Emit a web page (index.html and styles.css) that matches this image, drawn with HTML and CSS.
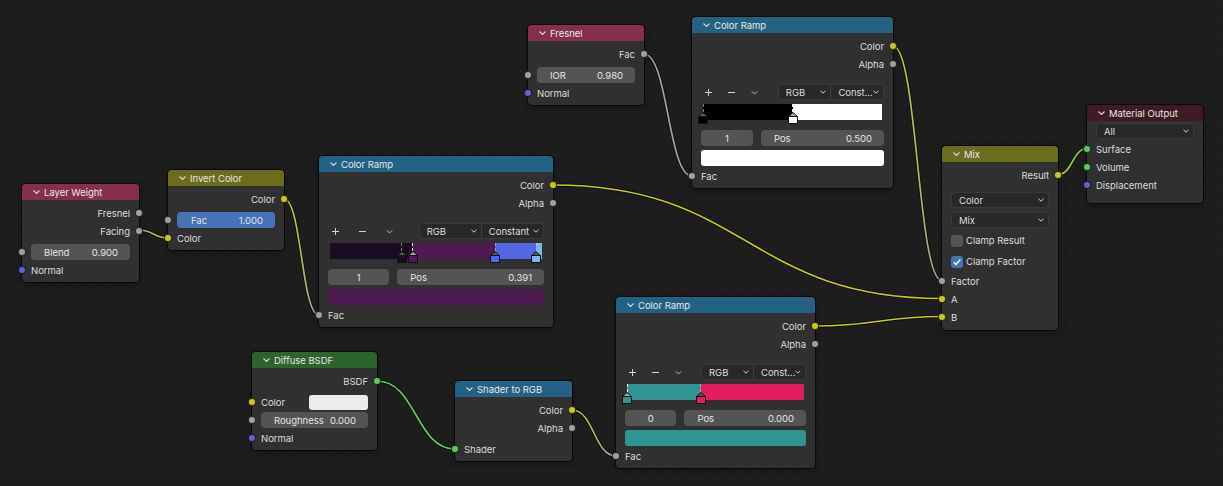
FILE: index.html
```html
<!DOCTYPE html>
<html>
<head>
<meta charset="utf-8">
<title>Shader Nodes</title>
<link rel="stylesheet" href="styles.css">
</head>
<body>
<div class="canvas">
  <svg class="wires" width="1223" height="486" viewBox="0 0 1223 486">
    <defs>
      <linearGradient id="g1" gradientUnits="userSpaceOnUse" x1="139" y1="0" x2="168" y2="0"><stop offset="0" stop-color="#a1a1a1"/><stop offset="1" stop-color="#c7c729"/></linearGradient>
      <linearGradient id="g2" gradientUnits="userSpaceOnUse" x1="284" y1="0" x2="319" y2="0"><stop offset="0" stop-color="#c7c729"/><stop offset="1" stop-color="#a1a1a1"/></linearGradient>
      <linearGradient id="g5" gradientUnits="userSpaceOnUse" x1="893" y1="0" x2="942" y2="0"><stop offset="0" stop-color="#c7c729"/><stop offset="1" stop-color="#a1a1a1"/></linearGradient>
      <linearGradient id="g6" gradientUnits="userSpaceOnUse" x1="1058" y1="0" x2="1087" y2="0"><stop offset="0" stop-color="#c7c729"/><stop offset="1" stop-color="#63c763"/></linearGradient>
      <linearGradient id="g8" gradientUnits="userSpaceOnUse" x1="572" y1="0" x2="616" y2="0"><stop offset="0" stop-color="#c7c729"/><stop offset="1" stop-color="#a1a1a1"/></linearGradient>
    </defs>
    <g class="shadow">
      <path d="M139 230 C153.5 230 153.5 238 168 238"/>
      <path d="M284 199 C301.5 199 301.5 315 319 315"/>
      <path d="M553 185 C747.5 185 747.5 298.5 942 298.5"/>
      <path d="M644 54 C668 54 668 176 692 176"/>
      <path d="M893 46 C917.5 46 917.5 280.5 942 280.5"/>
      <path d="M1058 174.5 C1072.5 174.5 1072.5 148.5 1087 148.5"/>
      <path d="M377 381 C416 381 416 449 455 449"/>
      <path d="M572 410 C594 410 594 456 616 456"/>
      <path d="M815 326 C878.5 326 878.5 316.5 942 316.5"/>
    </g>
    <g class="wire">
      <path stroke="url(#g1)" d="M139 230 C153.5 230 153.5 238 168 238"/>
      <path stroke="url(#g2)" d="M284 199 C301.5 199 301.5 315 319 315"/>
      <path stroke="#c7c729" d="M553 185 C747.5 185 747.5 298.5 942 298.5"/>
      <path stroke="#a1a1a1" d="M644 54 C668 54 668 176 692 176"/>
      <path stroke="url(#g5)" d="M893 46 C917.5 46 917.5 280.5 942 280.5"/>
      <path stroke="url(#g6)" d="M1058 174.5 C1072.5 174.5 1072.5 148.5 1087 148.5"/>
      <path stroke="#63c763" d="M377 381 C416 381 416 449 455 449"/>
      <path stroke="url(#g8)" d="M572 410 C594 410 594 456 616 456"/>
      <path stroke="#c7c729" d="M815 326 C878.5 326 878.5 316.5 942 316.5"/>
    </g>
  </svg>

  <!-- Layer Weight -->
  <div class="node n-lw">
    <div class="hdr h-input"><svg class="chev" width="7" height="4" viewBox="0 0 7 4"><path d="M0.5 0.5 3.5 3.5 6.5 0.5"/></svg><span>Layer Weight</span></div>
    <div class="body">
      <div class="row out"><span>Fresnel</span><i class="sock s-gray"></i></div>
      <div class="row out"><span>Facing</span><i class="sock s-gray"></i></div>
      <div class="row in gap"><i class="sock s-gray"></i><div class="num"><span>Blend</span><span>0.900</span></div></div>
      <div class="row in"><i class="sock s-vec"></i><span>Normal</span></div>
    </div>
  </div>

  <!-- Invert Color -->
  <div class="node n-inv">
    <div class="hdr h-color"><svg class="chev" width="7" height="4" viewBox="0 0 7 4"><path d="M0.5 0.5 3.5 3.5 6.5 0.5"/></svg><span>Invert Color</span></div>
    <div class="body">
      <div class="row out"><span>Color</span><i class="sock s-yel"></i></div>
      <div class="row in gap"><i class="sock s-gray"></i><div class="num blue"><span>Fac</span><span>1.000</span></div></div>
      <div class="row in"><i class="sock s-yel"></i><span>Color</span></div>
    </div>
  </div>

  <!-- Color Ramp (middle) -->
  <div class="node n-crm">
    <div class="hdr h-conv"><svg class="chev" width="7" height="4" viewBox="0 0 7 4"><path d="M0.5 0.5 3.5 3.5 6.5 0.5"/></svg><span>Color Ramp</span></div>
    <div class="body">
      <div class="row out"><span>Color</span><i class="sock s-yel"></i></div>
      <div class="row out"><span>Alpha</span><i class="sock s-gray"></i></div>
      <div class="ramp">
        <div class="tools">
          <div class="ticons">
            <span class="ti"><svg width="7" height="7" viewBox="0 0 7 7"><path d="M3.5 0V7M0 3.5H7"/></svg></span>
            <span class="ti"><svg width="7" height="7" viewBox="0 0 7 7"><path d="M0 3.5H7"/></svg></span>
            <span class="ti"><svg width="7" height="7" viewBox="0 0 7 7"><path class="thin" d="M0.8 2.3 3.5 5 6.2 2.3"/></svg></span>
          </div>
          <div class="seg">
            <div class="dd l"><span>RGB</span><svg class="dchev" width="6" height="4" viewBox="0 0 6 4"><path d="M0.5 0.8 3 3.2 5.5 0.8"/></svg></div>
            <div class="dd r"><span>Constant</span><svg class="dchev" width="6" height="4" viewBox="0 0 6 4"><path d="M0.5 0.8 3 3.2 5.5 0.8"/></svg></div>
          </div>
        </div>
        <div class="bar bar-mid">
          <div class="stop" style="left:33.8%;color:#1a0c21"><i class="dash"></i><svg width="10" height="12" viewBox="0 0 10 12"><path class="tri" d="M0.5 4.5 5 0.5 9.5 4.5Z"/><rect x="0.5" y="4.5" width="9" height="7"/></svg></div>
          <div class="stop active" style="left:39.1%;color:#4f1a4f"><i class="dash"></i><svg width="10" height="12" viewBox="0 0 10 12"><path class="tri" d="M0.5 4.5 5 0.5 9.5 4.5Z"/><rect x="0.5" y="4.5" width="9" height="7"/></svg></div>
          <div class="stop" style="left:78%;color:#5466e4"><i class="dash"></i><svg width="10" height="12" viewBox="0 0 10 12"><path class="tri" d="M0.5 4.5 5 0.5 9.5 4.5Z"/><rect x="0.5" y="4.5" width="9" height="7"/></svg></div>
          <div class="stop" style="left:97.4%;color:#7fb4f4"><i class="dash"></i><svg width="10" height="12" viewBox="0 0 10 12"><path class="tri" d="M0.5 4.5 5 0.5 9.5 4.5Z"/><rect x="0.5" y="4.5" width="9" height="7"/></svg></div>
        </div>
        <div class="rfields"><div class="num center idx">1</div><div class="num"><span>Pos</span><span>0.391</span></div></div>
        <div class="swatch sw-mid"></div>
      </div>
      <div class="row in fac"><i class="sock s-gray"></i><span>Fac</span></div>
    </div>
  </div>

  <!-- Fresnel -->
  <div class="node n-fres">
    <div class="hdr h-input"><svg class="chev" width="7" height="4" viewBox="0 0 7 4"><path d="M0.5 0.5 3.5 3.5 6.5 0.5"/></svg><span>Fresnel</span></div>
    <div class="body">
      <div class="row out"><span>Fac</span><i class="sock s-gray"></i></div>
      <div class="row in gap"><i class="sock s-gray"></i><div class="num"><span>IOR</span><span>0.980</span></div></div>
      <div class="row in"><i class="sock s-vec"></i><span>Normal</span></div>
    </div>
  </div>

  <!-- Color Ramp (top) -->
  <div class="node n-crt">
    <div class="hdr h-conv"><svg class="chev" width="7" height="4" viewBox="0 0 7 4"><path d="M0.5 0.5 3.5 3.5 6.5 0.5"/></svg><span>Color Ramp</span></div>
    <div class="body">
      <div class="row out"><span>Color</span><i class="sock s-yel"></i></div>
      <div class="row out"><span>Alpha</span><i class="sock s-gray"></i></div>
      <div class="ramp">
        <div class="tools">
          <div class="ticons">
            <span class="ti"><svg width="7" height="7" viewBox="0 0 7 7"><path d="M3.5 0V7M0 3.5H7"/></svg></span>
            <span class="ti"><svg width="7" height="7" viewBox="0 0 7 7"><path d="M0 3.5H7"/></svg></span>
            <span class="ti"><svg width="7" height="7" viewBox="0 0 7 7"><path class="thin" d="M0.8 2.3 3.5 5 6.2 2.3"/></svg></span>
          </div>
          <div class="seg">
            <div class="dd l"><span>RGB</span><svg class="dchev" width="6" height="4" viewBox="0 0 6 4"><path d="M0.5 0.8 3 3.2 5.5 0.8"/></svg></div>
            <div class="dd r"><span>Const...</span><svg class="dchev" width="6" height="4" viewBox="0 0 6 4"><path d="M0.5 0.8 3 3.2 5.5 0.8"/></svg></div>
          </div>
        </div>
        <div class="bar bar-top">
          <div class="stop" style="left:0%;color:#000000"><i class="dash"></i><svg width="10" height="12" viewBox="0 0 10 12"><path class="tri" d="M0.5 4.5 5 0.5 9.5 4.5Z"/><rect x="0.5" y="4.5" width="9" height="7"/></svg></div>
          <div class="stop active" style="left:50%;color:#ffffff"><i class="dash"></i><svg width="10" height="12" viewBox="0 0 10 12"><path class="tri" d="M0.5 4.5 5 0.5 9.5 4.5Z"/><rect x="0.5" y="4.5" width="9" height="7"/></svg></div>
        </div>
        <div class="rfields"><div class="num center idx">1</div><div class="num"><span>Pos</span><span>0.500</span></div></div>
        <div class="swatch sw-top"></div>
      </div>
      <div class="row in fac"><i class="sock s-gray"></i><span>Fac</span></div>
    </div>
  </div>

  <!-- Mix -->
  <div class="node n-mix">
    <div class="hdr h-color"><svg class="chev" width="7" height="4" viewBox="0 0 7 4"><path d="M0.5 0.5 3.5 3.5 6.5 0.5"/></svg><span>Mix</span></div>
    <div class="body mixbody">
      <div class="row out"><span>Result</span><i class="sock s-yel"></i></div>
      <div class="dd full first"><span>Color</span><svg class="dchev" width="6" height="4" viewBox="0 0 6 4"><path d="M0.5 0.8 3 3.2 5.5 0.8"/></svg></div>
      <div class="dd full second"><span>Mix</span><svg class="dchev" width="6" height="4" viewBox="0 0 6 4"><path d="M0.5 0.8 3 3.2 5.5 0.8"/></svg></div>
      <div class="chk first-chk"><i class="cb"></i><span>Clamp Result</span></div>
      <div class="chk"><i class="cb on"><svg width="12" height="12" viewBox="0 0 12 12"><path d="M2.8 6.2 5 8.4 9.3 3.6"/></svg></i><span>Clamp Factor</span></div>
      <div class="row in"><i class="sock s-gray"></i><span>Factor</span></div>
      <div class="row in"><i class="sock s-yel"></i><span>A</span></div>
      <div class="row in"><i class="sock s-yel"></i><span>B</span></div>
    </div>
  </div>

  <!-- Material Output -->
  <div class="node n-mo">
    <div class="hdr h-output"><svg class="chev" width="7" height="4" viewBox="0 0 7 4"><path d="M0.5 0.5 3.5 3.5 6.5 0.5"/></svg><span>Material Output</span></div>
    <div class="body mobody">
      <div class="dd full"><span>All</span><svg class="dchev" width="6" height="4" viewBox="0 0 6 4"><path d="M0.5 0.8 3 3.2 5.5 0.8"/></svg></div>
      <div class="row in after-dd"><i class="sock s-grn"></i><span>Surface</span></div>
      <div class="row in"><i class="sock s-grn"></i><span>Volume</span></div>
      <div class="row in"><i class="sock s-vec"></i><span>Displacement</span></div>
    </div>
  </div>

  <!-- Diffuse BSDF -->
  <div class="node n-dif">
    <div class="hdr h-shader"><svg class="chev" width="7" height="4" viewBox="0 0 7 4"><path d="M0.5 0.5 3.5 3.5 6.5 0.5"/></svg><span>Diffuse BSDF</span></div>
    <div class="body">
      <div class="row out"><span>BSDF</span><i class="sock s-grn"></i></div>
      <div class="row in gap"><i class="sock s-yel"></i><span>Color</span><i class="cswatch"></i></div>
      <div class="row in"><i class="sock s-gray"></i><div class="num"><span>Roughness</span><span>0.000</span></div></div>
      <div class="row in"><i class="sock s-vec"></i><span>Normal</span></div>
    </div>
  </div>

  <!-- Shader to RGB -->
  <div class="node n-s2r">
    <div class="hdr h-conv"><svg class="chev" width="7" height="4" viewBox="0 0 7 4"><path d="M0.5 0.5 3.5 3.5 6.5 0.5"/></svg><span>Shader to RGB</span></div>
    <div class="body">
      <div class="row out"><span>Color</span><i class="sock s-yel"></i></div>
      <div class="row out"><span>Alpha</span><i class="sock s-gray"></i></div>
      <div class="row in gap"><i class="sock s-grn"></i><span>Shader</span></div>
    </div>
  </div>

  <!-- Color Ramp (bottom) -->
  <div class="node n-crb">
    <div class="hdr h-conv"><svg class="chev" width="7" height="4" viewBox="0 0 7 4"><path d="M0.5 0.5 3.5 3.5 6.5 0.5"/></svg><span>Color Ramp</span></div>
    <div class="body">
      <div class="row out"><span>Color</span><i class="sock s-yel"></i></div>
      <div class="row out"><span>Alpha</span><i class="sock s-gray"></i></div>
      <div class="ramp">
        <div class="tools">
          <div class="ticons">
            <span class="ti"><svg width="7" height="7" viewBox="0 0 7 7"><path d="M3.5 0V7M0 3.5H7"/></svg></span>
            <span class="ti"><svg width="7" height="7" viewBox="0 0 7 7"><path d="M0 3.5H7"/></svg></span>
            <span class="ti"><svg width="7" height="7" viewBox="0 0 7 7"><path class="thin" d="M0.8 2.3 3.5 5 6.2 2.3"/></svg></span>
          </div>
          <div class="seg">
            <div class="dd l"><span>RGB</span><svg class="dchev" width="6" height="4" viewBox="0 0 6 4"><path d="M0.5 0.8 3 3.2 5.5 0.8"/></svg></div>
            <div class="dd r"><span>Const...</span><svg class="dchev" width="6" height="4" viewBox="0 0 6 4"><path d="M0.5 0.8 3 3.2 5.5 0.8"/></svg></div>
          </div>
        </div>
        <div class="bar bar-bot">
          <div class="stop active" style="left:0%;color:#2f9590"><i class="dash"></i><svg width="10" height="12" viewBox="0 0 10 12"><path class="tri" d="M0.5 4.5 5 0.5 9.5 4.5Z"/><rect x="0.5" y="4.5" width="9" height="7"/></svg></div>
          <div class="stop" style="left:41.8%;color:#e31b5f"><i class="dash"></i><svg width="10" height="12" viewBox="0 0 10 12"><path class="tri" d="M0.5 4.5 5 0.5 9.5 4.5Z"/><rect x="0.5" y="4.5" width="9" height="7"/></svg></div>
        </div>
        <div class="rfields"><div class="num center idx">0</div><div class="num"><span>Pos</span><span>0.000</span></div></div>
        <div class="swatch sw-bot"></div>
      </div>
      <div class="row in fac"><i class="sock s-gray"></i><span>Fac</span></div>
    </div>
  </div>
</div>
</body>
</html>
```
FILE: styles.css
```css
* { box-sizing: border-box; }
html, body { margin: 0; padding: 0; }
body {
  background: #1d1d1d;
  font-family: Inter, "DejaVu Sans", sans-serif;
  font-size: 9.5px;
  letter-spacing: -0.03px;
  color: #dcdcdc;
}
.canvas {
  position: relative;
  width: 1223px;
  height: 486px;
  overflow: hidden;
  background-color: #1d1d1d;
  background-image: radial-gradient(circle, #282828 0.9px, rgba(29,29,29,0) 1.1px);
  background-size: 16.7px 16.7px;
  background-position: -5px -4px;
}
.wires { position: absolute; left: 0; top: 0; }
.wires path { fill: none; }
.wires .shadow path { stroke: rgba(0,0,0,0.55); stroke-width: 3.4; }
.wires .wire path { stroke-width: 1.7; }

/* node frame */
.node {
  position: absolute;
  background: #303030;
  border-radius: 4px;
  box-shadow: 0 0 0 1px rgba(0,0,0,0.6), 0 2px 6px rgba(0,0,0,0.35);
}
.n-lw   { left: 22px;   top: 184px; width: 117px; }
.n-inv  { left: 168px;  top: 170px; width: 116px; }
.n-crm  { left: 319px;  top: 156px; width: 234px; }
.n-fres { left: 528px;  top: 25px;  width: 116px; }
.n-crt  { left: 692px;  top: 17px;  width: 201px; }
.n-mix  { left: 942px;  top: 146px; width: 116px; }
.n-mo   { left: 1087px; top: 105px; width: 116px; }
.n-dif  { left: 252px;  top: 352px; width: 125px; }
.n-s2r  { left: 455px;  top: 381px; width: 117px; }
.n-crb  { left: 616px;  top: 297px; width: 199px; }

.hdr {
  height: 16px;
  border-radius: 4px 4px 0 0;
  display: flex;
  align-items: center;
  gap: 4px;
  padding-left: 11px;
  color: #e6e6e6;
  white-space: nowrap;
}
.hdr .chev path { fill: none; stroke: #d8d8d8; stroke-width: 1.1; }
.h-input  { background: #83314a; }
.h-color  { background: #6d6c1e; }
.h-conv   { background: #246283; }
.h-shader { background: #2b652b; }
.h-output { background: #3e1b22; }

.body { padding: 4px 9px 3px; }
.row {
  position: relative;
  height: 18px;
  display: flex;
  align-items: center;
  white-space: nowrap;
}
.row.out { justify-content: flex-end; }
.row.gap { margin-top: 3px; }
.row.fac { margin-top: 1px; }

.sock {
  position: absolute;
  top: 50%;
  width: 8px;
  height: 8px;
  margin-top: -4px;
  border-radius: 50%;
  border: 1px solid rgba(0,0,0,0.75);
}
.out .sock { right: -13px; }
.in .sock { left: -13px; }
.s-gray { background: #a1a1a1; }
.s-yel  { background: #c7c729; }
.s-vec  { background: #6363c7; }
.s-grn  { background: #63c763; }

/* number / slider fields */
.num {
  flex: 1;
  height: 16px;
  background: #545454;
  border-radius: 4px;
  display: flex;
  align-items: center;
  justify-content: space-between;
  padding: 0 12px 0 13px;
  color: #e4e4e4;
  white-space: nowrap;
}
.num.blue { background: #4772b3; padding-left: 14px; }
.num.center { justify-content: center; padding: 0; }

/* dropdowns */
.dd {
  height: 16px;
  background: #282828;
  border: 1px solid #3a3a3a;
  border-radius: 4px;
  display: flex;
  align-items: center;
  justify-content: space-between;
  padding: 0 4px 0 7px;
  color: #dedede;
  white-space: nowrap;
  overflow: hidden;
}
.dchev path { fill: none; stroke: #cfcfcf; stroke-width: 1; }
.dd.full.first { margin-top: 8px; }
.dd.full.second { margin-top: 4px; }

/* checkboxes */
.chk {
  height: 21px;
  display: flex;
  align-items: center;
  gap: 3px;
  color: #dcdcdc;
}
.chk.first-chk { margin-top: 2px; }
.cb {
  width: 12px;
  height: 12px;
  border-radius: 3px;
  background: #545454;
  display: flex;
}
.cb.on { background: #4772b3; }
.cb svg path { fill: none; stroke: #ffffff; stroke-width: 1.5; }
.mixbody { padding-bottom: 4px; }

.mobody { padding-top: 2px; padding-bottom: 9px; }
.row.after-dd { margin-top: 1px; }

/* colour swatch on Diffuse */
.cswatch {
  margin-left: auto;
  width: 59px;
  height: 15px;
  background: #ececec;
  border-radius: 3px;
}

/* colour ramp */
.ramp { margin-top: 11px; }
.tools { display: flex; height: 16px; }
.ticons { flex: 0 0 42%; display: flex; align-items: center; }
.ti { flex: 0 0 30%; padding-left: 4px; display: flex; align-items: center; }
.ti svg path { fill: none; stroke: #d2d2d2; stroke-width: 1; }
.ti svg path.thin { stroke: #b8b8b8; }
.seg { flex: 1; display: flex; }
.seg .dd { flex: 1; min-width: 0; }
.seg .dd.l { border-radius: 4px 0 0 4px; border-right-color: #3f3f3f; }
.seg .dd.r { border-radius: 0 4px 4px 0; border-left: none; }

.bar {
  position: relative;
  height: 16px;
  margin: 4px 2px 0 2px;
}
.bar-mid { background: linear-gradient(to right, #1a0c21 0, #1a0c21 39.1%, #4f1a4f 39.1%, #4f1a4f 78%, #5466e4 78%, #5466e4 97.4%, #7fb4f4 97.4%); }
.bar-top { background: linear-gradient(to right, #000000 0, #000000 50%, #ffffff 50%); }
.bar-bot { background: linear-gradient(to right, #2f9590 0, #2f9590 41.8%, #e31b5f 41.8%); }

.stop {
  position: absolute;
  top: 0;
  width: 10px;
  height: 20px;
  margin-left: -5px;
  display: flex;
  flex-direction: column;
  align-items: center;
}
.stop .dash {
  flex: 0 0 8px;
  width: 0;
  border-left: 1px dashed rgba(200,200,200,0.6);
}
.stop.active .dash { border-left-color: rgba(255,255,255,0.9); }
.stop svg { display: block; }
.stop svg rect { fill: currentColor; stroke: #111111; stroke-width: 1; }
.stop svg .tri { fill: #5a5a5a; stroke: #111111; stroke-width: 1; }
.stop.active svg .tri { fill: #a8a8a8; }

.rfields { display: flex; gap: 8px; margin-top: 10px; }
.rfields .idx { flex: 0 0 28.4%; }
.swatch { height: 16px; margin-top: 4px; border-radius: 3px; }
.sw-mid { background: #4f1a4f; }
.sw-top { background: #ffffff; }
.sw-bot { background: #2f9590; }
```
